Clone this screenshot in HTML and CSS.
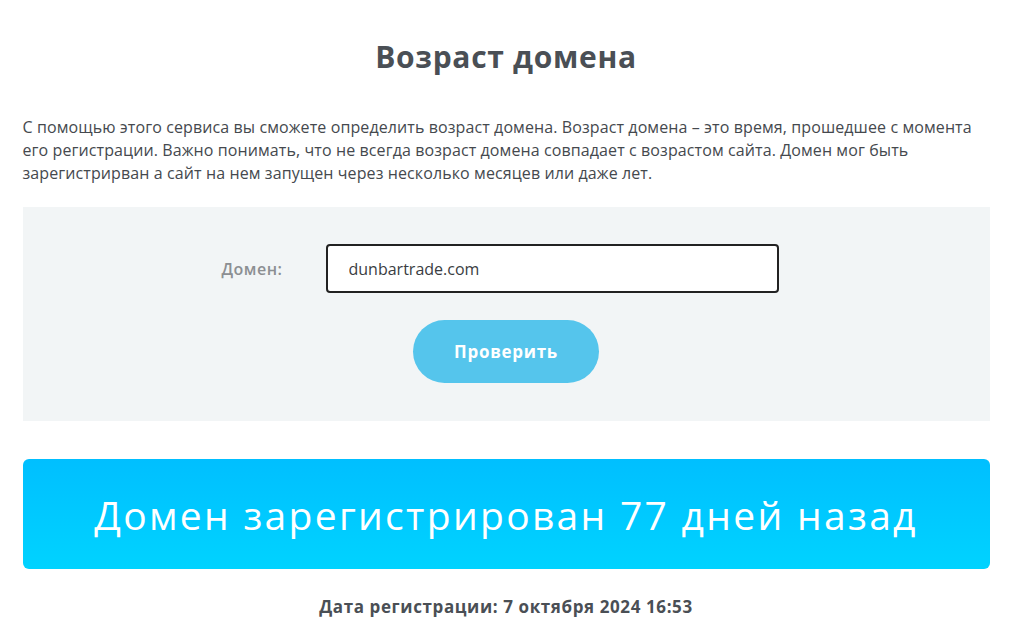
FILE: index.html
```html
<!DOCTYPE html>
<html lang="ru">
<head>
<meta charset="utf-8">
<title>Возраст домена</title>
<link rel="stylesheet" href="styles.css">
</head>
<body>
<main class="page">
  <h1 class="title">Возраст домена</h1>
  <p class="intro">С помощью этого сервиса вы сможете определить возраст домена. Возраст домена – это время, прошедшее с момента его регистрации. Важно понимать, что не всегда возраст домена совпадает с возрастом сайта. Домен мог быть зарегистрирван а сайт на нем запущен через несколько месяцев или даже лет.</p>
  <form class="panel">
    <div class="field">
      <label class="label" for="domain">Домен:</label>
      <input class="input" id="domain" type="text" value="dunbartrade.com">
    </div>
    <button class="btn" type="button">Проверить</button>
  </form>
  <div class="result">Домен зарегистрирован 77 дней назад</div>
  <p class="date">Дата регистрации: 7 октября 2024 16:53</p>
</main>
</body>
</html>
```

FILE: styles.css
```css
* { box-sizing: border-box; }
html, body { margin: 0; padding: 0; background: #fff; }
body { font-family: "Open Sans", "Liberation Sans", sans-serif; color: #4a4f55; }
.page {
  width: 967px;
  margin: 0 auto;
  padding-top: 37px;
}
.title {
  margin: 0;
  text-align: center;
  font-family: "Open Sans", sans-serif;
  font-weight: 700;
  font-size: 30px;
  line-height: 40px;
  letter-spacing: 0.7px;
  color: #4a4f55;
}
.intro {
  margin: 39px 0 0;
  font-size: 16px;
  line-height: 23px;
  letter-spacing: 0.1px;
  color: #45494e;
}
.panel {
  margin-top: 22px;
  background: #f2f5f6;
  height: 214px;
  padding-top: 37px;
  display: flex;
  flex-direction: column;
  align-items: center;
}
.field {
  display: flex;
  align-items: center;
  margin-left: -12px;
}
.label {
  width: 104px;
  font-size: 16px;
  font-weight: 600;
  letter-spacing: 0.5px;
  color: #8c8f92;
}
.input {
  width: 453px;
  height: 49px;
  border: 2px solid #222;
  border-radius: 4px;
  padding: 0 21px;
  font-family: "Open Sans", sans-serif;
  font-size: 16px;
  color: #3a3d42;
  background: #fff;
  outline: none;
}
.btn {
  margin-top: 27px;
  width: 186px;
  height: 63px;
  border: 0;
  border-radius: 32px;
  background: #55c5ec;
  color: #fff;
  font-family: "Open Sans", sans-serif;
  font-weight: 700;
  font-size: 17px;
  letter-spacing: 0.7px;
}
.result {
  margin-top: 38px;
  height: 110px;
  border-radius: 6px;
  background: linear-gradient(180deg, #00bfff 0%, #00d3ff 100%);
  color: #fff;
  display: flex;
  align-items: center;
  justify-content: center;
  font-size: 39px;
  letter-spacing: 2.3px;
}
.date {
  margin: 26px 0 0;
  text-align: center;
  font-weight: 700;
  font-size: 17px;
  letter-spacing: 0.6px;
  color: #4a4f55;
}
```
